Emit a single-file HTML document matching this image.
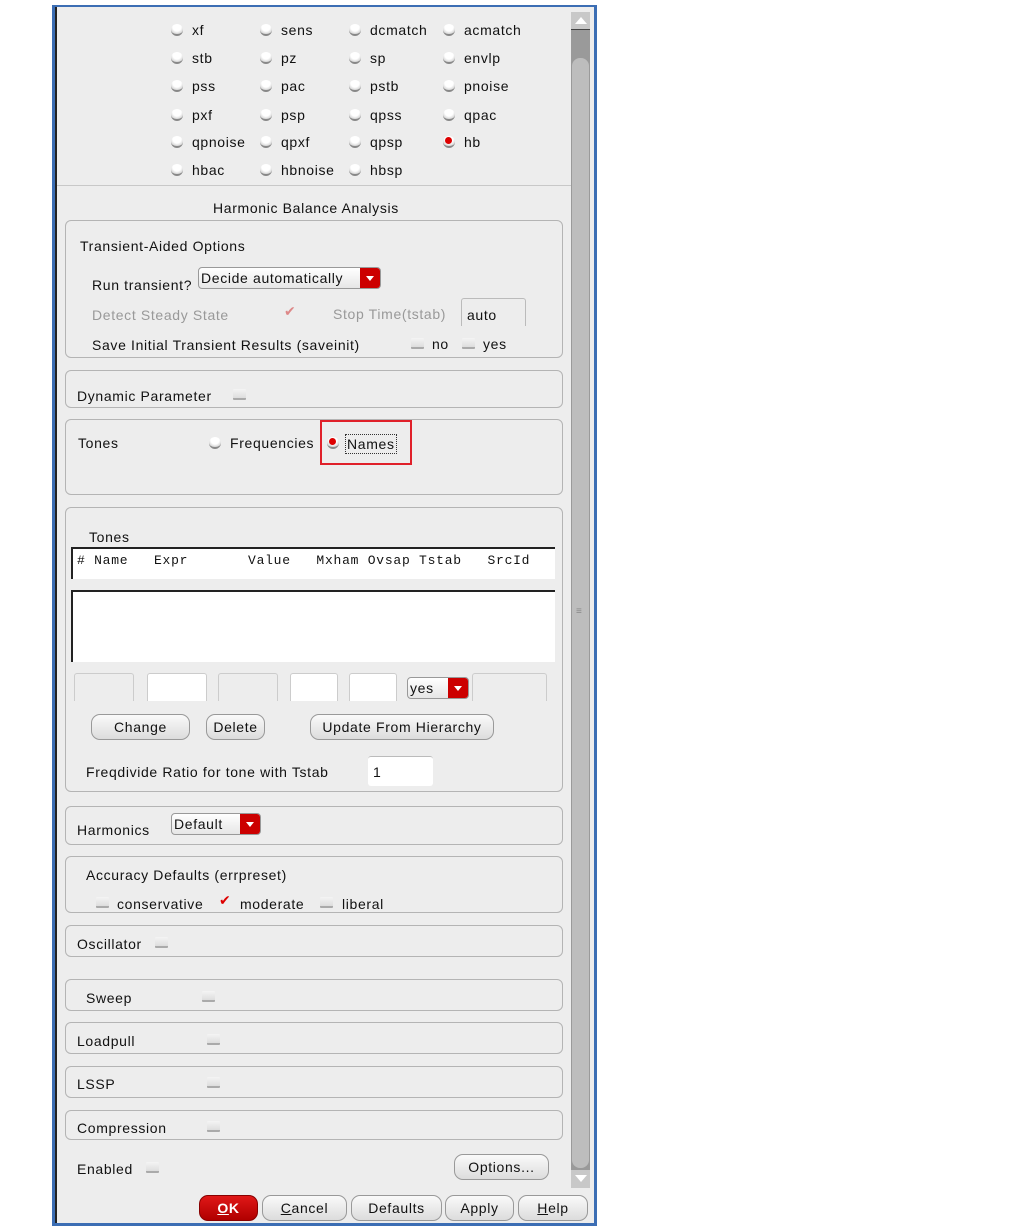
<!DOCTYPE html>
<html><head><meta charset="utf-8"><style>
*{margin:0;padding:0;box-sizing:border-box}
body{width:1013px;height:1230px;background:#fff;position:relative;overflow:hidden;font-family:"Liberation Sans","DejaVu Sans",sans-serif;font-size:14px;color:#111;letter-spacing:.65px}
.a{position:absolute;white-space:nowrap;line-height:16px}
.g{position:absolute;left:65px;width:498px;border:1px solid #b4b4b4;border-radius:6px}
.r{position:absolute;width:12px;height:12px;border-radius:50%;background:radial-gradient(circle at 50% 30%,#fff 45%,#e4e4e4 65%,#bbb 100%);border-bottom:2px solid #888}
.r.on::after{content:"";position:absolute;left:2px;top:1px;width:7px;height:7px;border-radius:50%;background:#d00}
.c{position:absolute;width:13px;height:11px;border-bottom:2px solid #aaa;background:linear-gradient(#f4f4f4,#ddd);border-radius:1px}
.btn{position:absolute;height:26px;border:1px solid #999;border-radius:9px;background:linear-gradient(#fafafa,#dcdcdc);text-align:center;line-height:24px}
.cb{position:absolute;height:22px;border:1px solid #999;border-radius:4px;background:linear-gradient(#fff,#e6e6e6);line-height:20px;padding-left:2px}
.cb i{position:absolute;right:0;top:0;bottom:0;width:20px;background:#c00;border-radius:0 3px 3px 0}
.cb i::after{content:"";position:absolute;left:6px;top:8px;border:4px solid transparent;border-top:5px solid #fff}
.f{position:absolute;height:28px;border:1px solid #ccc;border-bottom:none;border-radius:3px 3px 0 0}
.mono{font-family:"Liberation Mono",monospace;font-size:13px;letter-spacing:.75px}
.gr{color:#999}
</style></head><body>
<div style="position:absolute;left:52px;top:5px;width:545px;height:1221px;background:#3c6eb4"></div>
<div style="position:absolute;left:55px;top:7px;width:539px;height:1216px;background:#ededed;border-left:2px solid #222"></div>
<div style="position:absolute;left:57px;top:185px;width:514px;height:1px;background:#c8c8c8"></div>
<div style="position:absolute;left:571px;top:12px;width:19px;height:1176px;background:#9a9a9a"></div>
<div style="position:absolute;left:571px;top:12px;width:19px;height:18px;background:#c8c8c8;border-bottom:1px solid #444"></div>
<div style="position:absolute;left:575px;top:17px;border:6px solid transparent;border-bottom:7px solid #fff;border-top:none"></div>
<div style="position:absolute;left:572px;top:58px;width:17px;height:1110px;background:#bdbdbd;border-radius:8px"></div>
<div style="position:absolute;left:571px;top:1170px;width:19px;height:18px;background:#c8c8c8"></div>
<div style="position:absolute;left:575px;top:1175px;border:6px solid transparent;border-top:7px solid #fff;border-bottom:none"></div>
<div class="a" style="left:576px;top:604px;color:#888;font-size:10px">≡</div>

<div class="r" style="left:171px;top:24px"></div><div class="a" style="left:192px;top:22px">xf</div>
<div class="r" style="left:260px;top:24px"></div><div class="a" style="left:281px;top:22px">sens</div>
<div class="r" style="left:349px;top:24px"></div><div class="a" style="left:370px;top:22px">dcmatch</div>
<div class="r" style="left:443px;top:24px"></div><div class="a" style="left:464px;top:22px">acmatch</div>
<div class="r" style="left:171px;top:52px"></div><div class="a" style="left:192px;top:50px">stb</div>
<div class="r" style="left:260px;top:52px"></div><div class="a" style="left:281px;top:50px">pz</div>
<div class="r" style="left:349px;top:52px"></div><div class="a" style="left:370px;top:50px">sp</div>
<div class="r" style="left:443px;top:52px"></div><div class="a" style="left:464px;top:50px">envlp</div>
<div class="r" style="left:171px;top:80px"></div><div class="a" style="left:192px;top:78px">pss</div>
<div class="r" style="left:260px;top:80px"></div><div class="a" style="left:281px;top:78px">pac</div>
<div class="r" style="left:349px;top:80px"></div><div class="a" style="left:370px;top:78px">pstb</div>
<div class="r" style="left:443px;top:80px"></div><div class="a" style="left:464px;top:78px">pnoise</div>
<div class="r" style="left:171px;top:109px"></div><div class="a" style="left:192px;top:107px">pxf</div>
<div class="r" style="left:260px;top:109px"></div><div class="a" style="left:281px;top:107px">psp</div>
<div class="r" style="left:349px;top:109px"></div><div class="a" style="left:370px;top:107px">qpss</div>
<div class="r" style="left:443px;top:109px"></div><div class="a" style="left:464px;top:107px">qpac</div>
<div class="r" style="left:171px;top:136px"></div><div class="a" style="left:192px;top:134px">qpnoise</div>
<div class="r" style="left:260px;top:136px"></div><div class="a" style="left:281px;top:134px">qpxf</div>
<div class="r" style="left:349px;top:136px"></div><div class="a" style="left:370px;top:134px">qpsp</div>
<div class="r on" style="left:443px;top:136px"></div><div class="a" style="left:464px;top:134px">hb</div>
<div class="r" style="left:171px;top:164px"></div><div class="a" style="left:192px;top:162px">hbac</div>
<div class="r" style="left:260px;top:164px"></div><div class="a" style="left:281px;top:162px">hbnoise</div>
<div class="r" style="left:349px;top:164px"></div><div class="a" style="left:370px;top:162px">hbsp</div>

<div class="a" style="left:213px;top:200px">Harmonic Balance Analysis</div>

<div class="g" style="top:220px;height:138px"></div>
<div class="a" style="left:80px;top:238px">Transient-Aided Options</div>
<div class="a" style="left:92px;top:277px">Run transient?</div>
<div class="cb" style="left:198px;top:267px;width:183px">Decide automatically<i></i></div>
<div class="a gr" style="left:92px;top:307px">Detect Steady State</div>
<div class="a" style="left:284px;top:303px;color:#d88;font-size:14px">✔</div>
<div class="a gr" style="left:333px;top:306px">Stop Time(tstab)</div>
<div class="f" style="left:461px;top:298px;width:65px;border-color:#bbb"></div>
<div class="a" style="left:467px;top:307px">auto</div>
<div class="a" style="left:92px;top:337px">Save Initial Transient Results (saveinit)</div>
<div class="c" style="left:411px;top:338px"></div><div class="a" style="left:432px;top:336px">no</div>
<div class="c" style="left:462px;top:338px"></div><div class="a" style="left:483px;top:336px">yes</div>

<div class="g" style="top:370px;height:38px"></div>
<div class="a" style="left:77px;top:388px">Dynamic Parameter</div>
<div class="c" style="left:233px;top:389px"></div>

<div class="g" style="top:419px;height:76px"></div>
<div class="a" style="left:78px;top:435px">Tones</div>
<div class="r" style="left:209px;top:437px"></div><div class="a" style="left:230px;top:435px">Frequencies</div>
<div style="position:absolute;left:320px;top:420px;width:92px;height:45px;border:2px solid #e0202a"></div>
<div class="r on" style="left:327px;top:437px"></div>
<div class="a" style="left:345px;top:434px;border:1px dotted #333;padding:0 1px;line-height:18px">Names</div>

<div class="g" style="top:507px;height:285px"></div>
<div class="a" style="left:89px;top:529px">Tones</div>
<div style="position:absolute;left:71px;top:547px;width:484px;height:32px;background:#fff;border-top:2px solid #222;border-left:2px solid #222"></div>
<div class="a mono" style="left:77px;top:553px">#&nbsp;Name&nbsp;&nbsp;&nbsp;Expr&nbsp;&nbsp;&nbsp;&nbsp;&nbsp;&nbsp;&nbsp;Value&nbsp;&nbsp;&nbsp;Mxham Ovsap Tstab&nbsp;&nbsp;&nbsp;SrcId</div>
<div style="position:absolute;left:71px;top:590px;width:484px;height:72px;background:#fff;border-top:2px solid #222;border-left:2px solid #222"></div>
<div class="f" style="left:74px;top:673px;width:60px"></div>
<div class="f" style="left:147px;top:673px;width:60px;background:#fff"></div>
<div class="f" style="left:218px;top:673px;width:60px"></div>
<div class="f" style="left:290px;top:673px;width:48px;background:#fff"></div>
<div class="f" style="left:349px;top:673px;width:48px;background:#fff"></div>
<div class="cb" style="left:407px;top:677px;width:62px">yes<i></i></div>
<div class="f" style="left:472px;top:673px;width:75px"></div>
<div class="btn" style="left:91px;top:714px;width:99px">Change</div>
<div class="btn" style="left:206px;top:714px;width:59px">Delete</div>
<div class="btn" style="left:310px;top:714px;width:184px">Update From Hierarchy</div>
<div class="a" style="left:86px;top:764px">Freqdivide Ratio for tone with Tstab</div>
<div style="position:absolute;left:368px;top:756px;width:65px;height:30px;background:#fff;border-top:1px solid #bbb;border-radius:3px"></div>
<div class="a" style="left:373px;top:764px">1</div>

<div class="g" style="top:806px;height:39px"></div>
<div class="a" style="left:77px;top:822px">Harmonics</div>
<div class="cb" style="left:171px;top:813px;width:90px">Default<i></i></div>

<div class="g" style="top:856px;height:57px"></div>
<div class="a" style="left:86px;top:867px">Accuracy Defaults (errpreset)</div>
<div class="c" style="left:96px;top:897px"></div><div class="a" style="left:117px;top:896px">conservative</div>
<div class="a" style="left:219px;top:892px;color:#d00">✔</div><div class="a" style="left:240px;top:896px">moderate</div>
<div class="c" style="left:320px;top:897px"></div><div class="a" style="left:342px;top:896px">liberal</div>

<div class="g" style="top:925px;height:32px"></div>
<div class="a" style="left:77px;top:936px">Oscillator</div><div class="c" style="left:155px;top:937px"></div>

<div class="g" style="top:979px;height:32px"></div>
<div class="a" style="left:86px;top:990px">Sweep</div><div class="c" style="left:202px;top:991px"></div>

<div class="g" style="top:1022px;height:32px"></div>
<div class="a" style="left:77px;top:1033px">Loadpull</div><div class="c" style="left:207px;top:1034px"></div>

<div class="g" style="top:1066px;height:32px"></div>
<div class="a" style="left:77px;top:1076px">LSSP</div><div class="c" style="left:207px;top:1077px"></div>

<div class="g" style="top:1110px;height:30px"></div>
<div class="a" style="left:77px;top:1120px">Compression</div><div class="c" style="left:207px;top:1121px"></div>

<div class="a" style="left:77px;top:1161px">Enabled</div><div class="c" style="left:146px;top:1162px"></div>
<div class="btn" style="left:454px;top:1154px;width:95px">Options...</div>

<div class="btn" style="left:199px;top:1195px;width:59px;background:linear-gradient(#e01818,#b00000);border-color:#800;color:#fff;font-weight:bold"><u>O</u>K</div>
<div class="btn" style="left:262px;top:1195px;width:85px"><u>C</u>ancel</div>
<div class="btn" style="left:351px;top:1195px;width:91px">Defaults</div>
<div class="btn" style="left:445px;top:1195px;width:69px">Apply</div>
<div class="btn" style="left:518px;top:1195px;width:70px"><u>H</u>elp</div>
</body></html>
